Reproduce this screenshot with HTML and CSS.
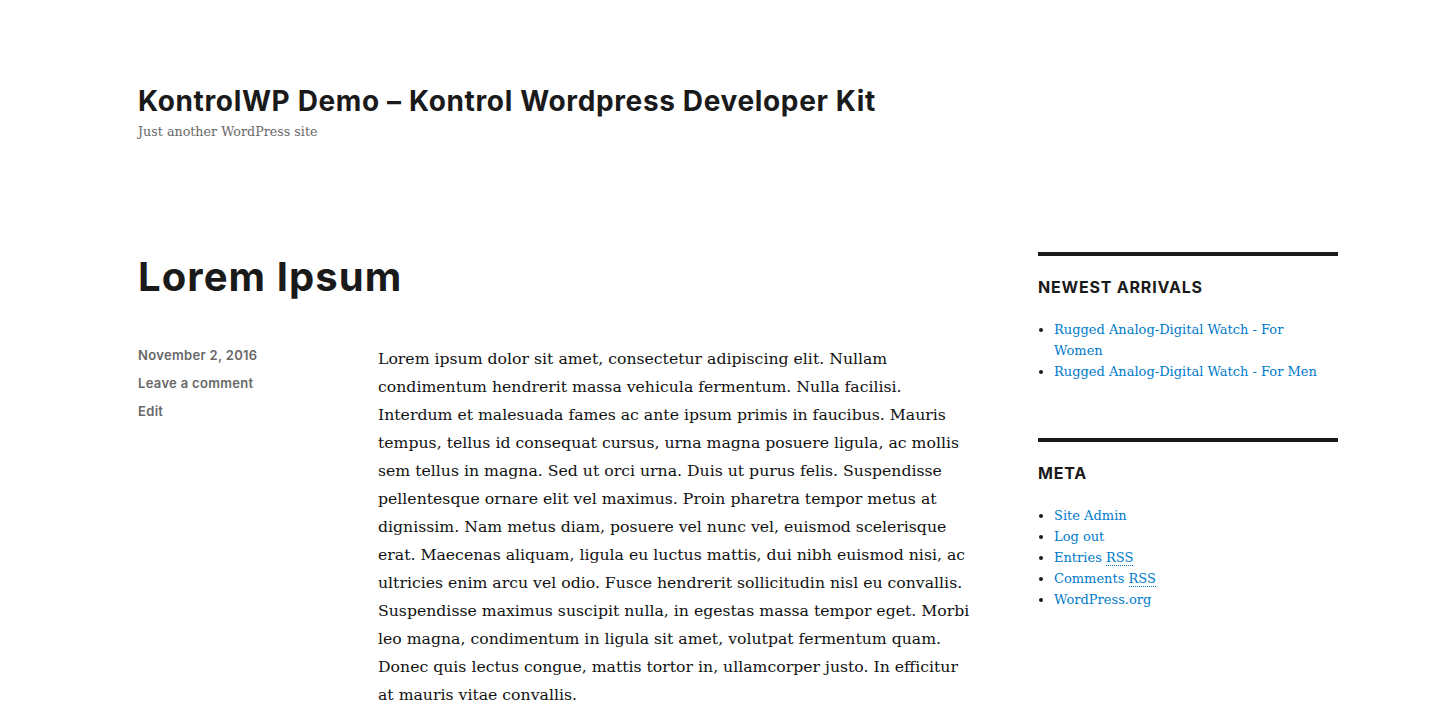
FILE: index.html
```html
<!DOCTYPE html>
<html lang="en">
<head>
<meta charset="utf-8">
<title>KontrolWP Demo – Kontrol Wordpress Developer Kit</title>
<link rel="stylesheet" href="styles.css">
</head>
<body>
<div class="site">
  <header class="site-header">
    <p class="site-title"><a href="#">KontrolWP Demo – Kontrol Wordpress Developer Kit</a></p>
    <p class="site-description">Just another WordPress site</p>
  </header>
  <div class="site-content">
    <main class="content-area">
      <article class="post">
        <h1 class="entry-title">Lorem Ipsum</h1>
        <div class="entry-body">
          <footer class="entry-footer">
            <span class="meta"><a href="#">November 2, 2016</a></span>
            <span class="meta"><a href="#">Leave a comment</a></span>
            <span class="meta"><a href="#">Edit</a></span>
          </footer>
          <div class="entry-content">
            <p>Lorem ipsum dolor sit amet, consectetur adipiscing elit. Nullam condimentum hendrerit massa vehicula fermentum. Nulla facilisi. Interdum et malesuada fames ac ante ipsum primis in faucibus. Mauris tempus, tellus id consequat cursus, urna magna posuere ligula, ac mollis sem tellus in magna. Sed ut orci urna. Duis ut purus felis. Suspendisse pellentesque ornare elit vel maximus. Proin pharetra tempor metus at dignissim. Nam metus diam, posuere vel nunc vel, euismod scelerisque erat. Maecenas aliquam, ligula eu luctus mattis, dui nibh euismod nisi, ac ultricies enim arcu vel odio. Fusce hendrerit sollicitudin nisl eu convallis. Suspendisse maximus suscipit nulla, in egestas massa tempor eget. Morbi leo magna, condimentum in ligula sit amet, volutpat fermentum quam. Donec quis lectus congue, mattis tortor in, ullamcorper justo. In efficitur at mauris vitae convallis.</p>
          </div>
        </div>
      </article>
    </main>
    <aside class="sidebar">
      <section class="widget">
        <h2 class="widget-title">Newest Arrivals</h2>
        <ul>
          <li><a href="#">Rugged Analog-Digital Watch - For Women</a></li>
          <li><a href="#">Rugged Analog-Digital Watch - For Men</a></li>
        </ul>
      </section>
      <section class="widget">
        <h2 class="widget-title">Meta</h2>
        <ul>
          <li><a href="#">Site Admin</a></li>
          <li><a href="#">Log out</a></li>
          <li><a href="#">Entries <abbr title="Really Simple Syndication">RSS</abbr></a></li>
          <li><a href="#">Comments <abbr title="Really Simple Syndication">RSS</abbr></a></li>
          <li><a href="#">WordPress.org</a></li>
        </ul>
      </section>
    </aside>
  </div>
</div>
</body>
</html>
```

FILE: styles.css
```css
* { box-sizing: border-box; }
html, body { margin: 0; padding: 0; background: #fff; }
body {
  color: #1a1a1a;
  font-family: "DejaVu Serif", serif;
  font-size: 15.7px;
}
a { text-decoration: none; }
.site {
  padding: 0 114px 0 138px;
}
.site-header {
  padding-top: 84px;
  height: 252px;
}
.site-title {
  margin: 0;
  font-family: Inter, "DejaVu Sans", sans-serif;
  font-weight: 700;
  font-size: 28px;
  line-height: 35px;
  letter-spacing: 0.023em;
}
.site-title a { color: #1a1a1a; }
.site-description {
  margin: 3px 0 0;
  font-family: "DejaVu Serif", serif;
  font-size: 12.7px;
  line-height: 20px;
  color: #686868;
}
.site-content {
  display: flex;
  justify-content: space-between;
}
.content-area { width: 840px; }
.entry-title {
  margin: 0;
  font-family: Inter, "DejaVu Sans", sans-serif;
  font-weight: 700;
  font-size: 40px;
  line-height: 49px;
  letter-spacing: 0.027em;
}
.entry-body {
  display: flex;
  margin-top: 44px;
}
.entry-footer {
  width: 240px;
  flex: none;
  font-family: Inter, "DejaVu Sans", sans-serif;
  font-size: 13px;
  font-weight: 600;
  letter-spacing: 0.025em;
}
.meta {
  display: block;
  line-height: 21px;
  margin-bottom: 7px;
}
.meta a { color: #686868; }
.entry-content { width: 600px; }
.entry-content p {
  margin: 0;
  line-height: 28px;
  color: #111;
}
.sidebar {
  width: 300px;
  flex: none;
}
.widget {
  border-top: 4px solid #1a1a1a;
  padding-top: 21px;
  margin-bottom: 56px;
}
.widget-title {
  margin: 0 0 21px;
  font-family: Inter, "DejaVu Sans", sans-serif;
  font-weight: 700;
  font-size: 16px;
  line-height: 21px;
  letter-spacing: 0.05em;
  text-transform: uppercase;
}
.widget ul {
  margin: 0;
  padding: 0 10px 0 16px;
  font-size: 13px;
  line-height: 21px;
}
.widget li a { color: #007acc; }
abbr {
  text-decoration: none;
  border-bottom: 1px dotted currentColor;
}
```
